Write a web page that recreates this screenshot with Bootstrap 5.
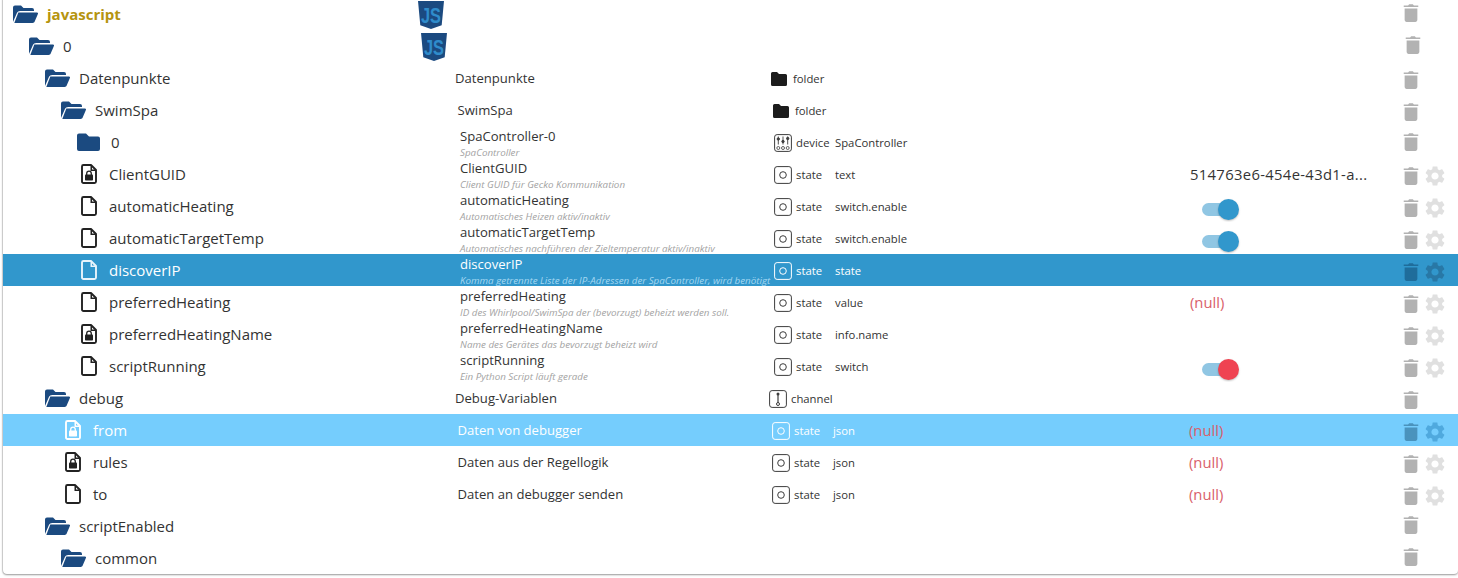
<!DOCTYPE html>
<html lang="de">
<head>
<meta charset="utf-8">
<title>Objekte</title>
<link rel="stylesheet" href="https://cdn.jsdelivr.net/npm/bootstrap@5.3.0/dist/css/bootstrap.min.css">
<script src="https://cdn.jsdelivr.net/npm/bootstrap@5.3.0/dist/js/bootstrap.bundle.min.js"></script>
<style>
html,body{height:100%;overflow:hidden;background:#fff}
body{font-family:"Open Sans","Liberation Sans",sans-serif;color:#333}
.tree-box{margin:-2px 0 0 3px;width:1455px;height:576px;border:0;border-radius:0 0 4px 4px;box-shadow:0 1px 2px rgba(0,0,0,.4),-1px 0 1px rgba(0,0,0,.12);overflow:hidden}
.obj-row{height:32px;overflow:hidden}
.obj-row.sel{background:#3197cc;color:#fff}
.obj-row.act{background:#75cdfd;color:#fff}
.cell-name{flex:none;font-size:15px;white-space:nowrap}
.lv0 .cell-name{width:447px;padding-left:10px}
.lv1 .cell-name{width:449.5px;padding-left:26px}
.lv2 .cell-name{width:452px;padding-left:42px}
.lv3 .cell-name{width:454.5px;padding-left:58px}
.lv4 .cell-name{width:457px;padding-left:74px}
.lv0 .cell-title{width:317px}
.lv1 .cell-title{width:316.5px}
.lv2 .cell-title{width:316px}
.lv3 .cell-title{width:315.5px}
.lv4 .cell-title{width:315px}
.cell-title{flex:none;font-size:13.1px;line-height:16px;white-space:nowrap}
.cell-title .sub-line{display:block;font-size:9.8px;line-height:12px;margin-top:3px;font-style:italic;color:#a3a3a3}
.sel .sub-line{color:#a5d8f2}
.with-sub{margin-top:2px}
.cell-type{flex:none;width:419px;font-size:11.3px;white-space:nowrap;margin-top:2px}
.lv0 .cell-type,.lv1 .cell-type{width:423px}
.lv2 .cell-type{width:419px}
.lv3 .cell-type{width:417px}
.lv4 .cell-type{width:415px}
.type-label{display:inline-block;width:39px}
.cell-value{flex:none;width:210px;font-size:14.8px;white-space:nowrap}
.val-guid{display:block;letter-spacing:.33px;margin-top:1px}
.val-null{color:#d9606a}
.lv3 .val-null{text-indent:-1px}
.cell-acts{flex:none;color:#b2b2b2;margin-left:2px}
.acts-low{margin-top:4px}
.acts-high{margin-top:-2px}
.ico-open{width:25px;height:18px;color:#1b4a80;margin-right:9px;flex:none}
.ico-closed{width:23px;height:18px;color:#1b4a80;margin-right:11px;flex:none}
.ico-file{width:16px;height:20px;margin-left:4px;margin-right:12px;flex:none;color:#222}
.act .ico-file,.act .ico-sq{color:#fff}
.sel .ico-sq{color:#fff}
.sel .ico-file{color:#e8f4fb}
.ico-folder{width:16px;height:14px;color:#1c1c1c;margin-right:6px;flex:none}
.ico-sq{width:18px;height:18px;color:#3c3c3c;margin-left:-1px;margin-right:4px;flex:none}
.ico-chan{margin-left:-2px}
.ico-js{width:26px;height:28px;margin-left:-32px;margin-top:1px;flex:none}
.lv1 .ico-js{margin-left:-31.5px}
.js-name{color:#b5940f;font-weight:700}
.ico-trash{width:18px;height:20px;display:block;color:#b2b2b2;flex:none;margin-right:3px}
.ico-gear{width:24px;height:24px;display:block;color:#e0e0e0;flex:none;margin-left:0}
.sel .ico-trash{color:#1f6d9b}
.act .ico-trash{color:#4a93bd}
.sel .ico-gear{color:#2878a6}
.act .ico-gear{color:#4fa9de}
.sw-wrap{display:block;position:relative;width:37px;height:21px;margin-left:12px;margin-top:6px}
.sw-track{display:block;margin-top:4px;width:26px;height:13px;border-radius:7px;background:#90c6e3;position:absolute;left:0;top:0}
.sw-knob{position:absolute;left:16px;top:0;width:21px;height:21px;border-radius:50%;background:#3197cc;box-shadow:0 1px 2px rgba(0,0,0,.25)}
.sw-knob.off{background:#ef4352}
</style>
</head>
<body>
<svg width="0" height="0" class="position-absolute">
<defs>
<symbol id="i-open" viewBox="0 0 25 18"><path fill="currentColor" d="M0 17V2.500A2 2 0 0 1 2 .5h6l2.500 2.500H19a2 2 0 0 1 2 2v1H7.200C5.700 6 4.500 6.800 3.900 8L0 17z"/><path fill="currentColor" d="M5.300 7.500H24c.8 0 1.200.7 1 1.300L21.800 16.300c-.4.900-1.100 1.700-2.200 1.700H1.300L5.300 7.500z"/></symbol>
<symbol id="i-closed" viewBox="0 0 23 18"><path fill="currentColor" d="M0 2.500A2 2 0 0 1 2 .5h7l3 3h9a2 2 0 0 1 2 2V16a2 2 0 0 1-2 2H2a2 2 0 0 1-2-2z"/></symbol>
<symbol id="i-file" viewBox="0 0 16 20"><path fill="none" stroke="currentColor" stroke-width="1.900" stroke-linejoin="round" d="M2.500 1H10l5 5v11.500a1.500 1.500 0 0 1-1.500 1.500h-11A1.500 1.500 0 0 1 1 17.500v-15A1.500 1.500 0 0 1 2.500 1z"/><path fill="currentColor" d="M9.500 1v6H15V5.500h-4V1z"/></symbol>
<symbol id="i-lock" viewBox="0 0 16 20"><path fill="none" stroke="currentColor" stroke-width="1.900" stroke-linejoin="round" d="M2.500 1H10l5 5v11.500a1.500 1.500 0 0 1-1.500 1.500h-11A1.500 1.500 0 0 1 1 17.500v-15A1.500 1.500 0 0 1 2.500 1z"/><path fill="currentColor" d="M9.500 1v6H15V5.500h-4V1z"/><rect x="4" y="10.500" width="8" height="6" rx=".8" fill="currentColor"/><path fill="none" stroke="currentColor" stroke-width="1.300" d="M5.700 11V9.500a2.300 2.300 0 0 1 4.600 0V11"/></symbol>
<symbol id="i-folder" viewBox="0 0 16 14"><path fill="currentColor" d="M0 1.500A1.500 1.500 0 0 1 1.500 0h4.500l2 2h6.500A1.500 1.500 0 0 1 16 3.500V12.500a1.500 1.500 0 0 1-1.500 1.500h-13A1.500 1.500 0 0 1 0 12.500z"/></symbol>
<symbol id="i-state" viewBox="0 0 18 18"><rect x=".6" y=".6" width="16.800" height="16.800" rx="2.500" fill="none" stroke="currentColor" stroke-width="1"/><circle cx="9" cy="9" r="3.300" fill="none" stroke="currentColor" stroke-width="1"/></symbol>
<symbol id="i-chan" viewBox="0 0 18 18"><rect x=".6" y=".6" width="16.800" height="16.800" rx="2.500" fill="none" stroke="currentColor" stroke-width="1"/><circle cx="9" cy="4" r="1.500" fill="currentColor"/><path stroke="currentColor" stroke-width="1.200" d="M9 4v9"/><circle cx="9" cy="14" r="1.500" fill="#fff" stroke="currentColor" stroke-width="1"/></symbol>
<symbol id="i-device" viewBox="0 0 18 18"><rect x=".6" y=".6" width="16.800" height="16.800" rx="2.500" fill="none" stroke="currentColor" stroke-width="1"/><g stroke="currentColor" stroke-width=".9" fill="currentColor"><path d="M4.300 2.500v8M9 2.500v8M13.700 2.500v8"/><circle cx="4.300" cy="5" r="1.200"/><circle cx="9" cy="7.500" r="1.200"/><circle cx="13.700" cy="4.500" r="1.200"/></g><g fill="none" stroke="currentColor" stroke-width=".8"><circle cx="4.300" cy="14" r="1.500"/><circle cx="9" cy="14" r="1.500"/><circle cx="13.700" cy="14" r="1.500"/></g></symbol>
<symbol id="i-trash" viewBox="3 1 18 22"><path fill="currentColor" d="M5 19.500c0 1.300.9 2.500 2.200 2.500h9.600c1.300 0 2.200-1.200 2.200-2.500V7H5v12.500zM20 3.800h-4.800L14 2.500h-4L8.800 3.800H4V5.500h16z"/></symbol>
<symbol id="i-gear" viewBox="0 0 24 24"><path fill="currentColor" d="M19.140 12.940c.04-.3.06-.61.06-.94 0-.32-.02-.64-.07-.94l2.030-1.580c.18-.14.23-.41.12-.61l-1.920-3.320c-.12-.22-.37-.29-.59-.22l-2.390.96c-.5-.38-1.030-.7-1.620-.94l-.36-2.540c-.04-.24-.24-.41-.48-.41h-3.840c-.24 0-.43.17-.47.41l-.36 2.540c-.59.24-1.130.57-1.620.94l-2.390-.96c-.22-.08-.47 0-.59.22L2.740 8.870c-.12.21-.08.47.12.61l2.030 1.580c-.05.3-.09.63-.09.94s.02.64.07.94l-2.030 1.580c-.18.14-.23.41-.12.61l1.920 3.320c.12.22.37.29.59.22l2.390-.96c.5.38 1.030.7 1.620.94l.36 2.540c.05.24.24.41.48.41h3.840c.24 0 .44-.17.47-.41l.36-2.540c.59-.24 1.130-.56 1.620-.94l2.390.96c.22.08.47 0 .59-.22l1.920-3.320c.12-.22.07-.47-.12-.61l-2.010-1.580zM12 15.600c-1.980 0-3.600-1.620-3.600-3.600s1.620-3.600 3.600-3.600 3.600 1.620 3.600 3.600-1.620 3.600-3.600 3.600z"/></symbol>
<symbol id="i-js" viewBox="0 0 26 28"><path fill="#1b4a80" d="M0 0h26l-2.300 24.300L13 28 2.300 24.300z"/><text x="13" y="22" text-anchor="middle" font-family="Liberation Sans" font-weight="700" font-size="22" textLength="20" lengthAdjust="spacingAndGlyphs" fill="#2f8ccb">JS</text></symbol>
</defs>
</svg>

<div class="card tree-box">

<div class="obj-row lv0 d-flex align-items-center">
 <div class="cell-name d-flex align-items-center js-name"><svg class="ico-open"><use href="#i-open"/></svg><span>javascript</span></div>
 <div class="cell-title"><svg class="ico-js d-block"><use href="#i-js"/></svg></div>
 <div class="cell-type"></div><div class="cell-value"></div>
 <div class="cell-acts d-flex acts-high"><svg class="ico-trash"><use href="#i-trash"/></svg></div>
</div>

<div class="obj-row lv1 d-flex align-items-center">
 <div class="cell-name d-flex align-items-center"><svg class="ico-open"><use href="#i-open"/></svg><span>0</span></div>
 <div class="cell-title"><svg class="ico-js d-block"><use href="#i-js"/></svg></div>
 <div class="cell-type"></div><div class="cell-value"></div>
 <div class="cell-acts d-flex acts-high"><svg class="ico-trash"><use href="#i-trash"/></svg></div>
</div>

<div class="obj-row lv2 d-flex align-items-center">
 <div class="cell-name d-flex align-items-center"><svg class="ico-open"><use href="#i-open"/></svg><span>Datenpunkte</span></div>
 <div class="cell-title">Datenpunkte</div>
 <div class="cell-type d-flex align-items-center"><svg class="ico-folder"><use href="#i-folder"/></svg><span>folder</span></div>
 <div class="cell-value"></div>
 <div class="cell-acts d-flex acts-low"><svg class="ico-trash"><use href="#i-trash"/></svg></div>
</div>

<div class="obj-row lv3 d-flex align-items-center">
 <div class="cell-name d-flex align-items-center"><svg class="ico-open"><use href="#i-open"/></svg><span>SwimSpa</span></div>
 <div class="cell-title">SwimSpa</div>
 <div class="cell-type d-flex align-items-center"><svg class="ico-folder"><use href="#i-folder"/></svg><span>folder</span></div>
 <div class="cell-value"></div>
 <div class="cell-acts d-flex acts-low"><svg class="ico-trash"><use href="#i-trash"/></svg></div>
</div>

<div class="obj-row lv4 d-flex align-items-center">
 <div class="cell-name d-flex align-items-center"><svg class="ico-closed"><use href="#i-closed"/></svg><span>0</span></div>
 <div class="cell-title with-sub">SpaController-0<span class="sub-line">SpaController</span></div>
 <div class="cell-type d-flex align-items-center"><svg class="ico-sq"><use href="#i-device"/></svg><span class="type-label">device</span><span>SpaController</span></div>
 <div class="cell-value"></div>
 <div class="cell-acts d-flex"><svg class="ico-trash"><use href="#i-trash"/></svg></div>
</div>

<div class="obj-row lv4 d-flex align-items-center">
 <div class="cell-name d-flex align-items-center"><svg class="ico-file"><use href="#i-lock"/></svg><span>ClientGUID</span></div>
 <div class="cell-title with-sub">ClientGUID<span class="sub-line">Client GUID für Gecko Kommunikation</span></div>
 <div class="cell-type d-flex align-items-center"><svg class="ico-sq"><use href="#i-state"/></svg><span class="type-label">state</span><span>text</span></div>
 <div class="cell-value"><span class="val-guid">514763e6-454e-43d1-a...</span></div>
 <div class="cell-acts d-flex align-items-center acts-low"><svg class="ico-trash"><use href="#i-trash"/></svg><svg class="ico-gear"><use href="#i-gear"/></svg></div>
</div>

<div class="obj-row lv4 d-flex align-items-center">
 <div class="cell-name d-flex align-items-center"><svg class="ico-file"><use href="#i-file"/></svg><span>automaticHeating</span></div>
 <div class="cell-title with-sub">automaticHeating<span class="sub-line">Automatisches Heizen aktiv/inaktiv</span></div>
 <div class="cell-type d-flex align-items-center"><svg class="ico-sq"><use href="#i-state"/></svg><span class="type-label">state</span><span>switch.enable</span></div>
 <div class="cell-value"><span class="sw-wrap"><span class="sw-track"></span><span class="sw-knob"></span></span></div>
 <div class="cell-acts d-flex align-items-center acts-low"><svg class="ico-trash"><use href="#i-trash"/></svg><svg class="ico-gear"><use href="#i-gear"/></svg></div>
</div>

<div class="obj-row lv4 d-flex align-items-center">
 <div class="cell-name d-flex align-items-center"><svg class="ico-file"><use href="#i-file"/></svg><span>automaticTargetTemp</span></div>
 <div class="cell-title with-sub">automaticTargetTemp<span class="sub-line">Automatisches nachführen der Zieltemperatur aktiv/inaktiv</span></div>
 <div class="cell-type d-flex align-items-center"><svg class="ico-sq"><use href="#i-state"/></svg><span class="type-label">state</span><span>switch.enable</span></div>
 <div class="cell-value"><span class="sw-wrap"><span class="sw-track"></span><span class="sw-knob"></span></span></div>
 <div class="cell-acts d-flex align-items-center acts-low"><svg class="ico-trash"><use href="#i-trash"/></svg><svg class="ico-gear"><use href="#i-gear"/></svg></div>
</div>

<div class="obj-row lv4 sel d-flex align-items-center">
 <div class="cell-name d-flex align-items-center"><svg class="ico-file"><use href="#i-file"/></svg><span>discoverIP</span></div>
 <div class="cell-title with-sub">discoverIP<span class="sub-line">Komma getrennte Liste der IP-Adressen der SpaController, wird benötigt</span></div>
 <div class="cell-type d-flex align-items-center"><svg class="ico-sq"><use href="#i-state"/></svg><span class="type-label">state</span><span>state</span></div>
 <div class="cell-value"></div>
 <div class="cell-acts d-flex align-items-center acts-low"><svg class="ico-trash"><use href="#i-trash"/></svg><svg class="ico-gear"><use href="#i-gear"/></svg></div>
</div>

<div class="obj-row lv4 d-flex align-items-center">
 <div class="cell-name d-flex align-items-center"><svg class="ico-file"><use href="#i-file"/></svg><span>preferredHeating</span></div>
 <div class="cell-title with-sub">preferredHeating<span class="sub-line">ID des Whirlpool/SwimSpa der (bevorzugt) beheizt werden soll.</span></div>
 <div class="cell-type d-flex align-items-center"><svg class="ico-sq"><use href="#i-state"/></svg><span class="type-label">state</span><span>value</span></div>
 <div class="cell-value val-null">(null)</div>
 <div class="cell-acts d-flex align-items-center acts-low"><svg class="ico-trash"><use href="#i-trash"/></svg><svg class="ico-gear"><use href="#i-gear"/></svg></div>
</div>

<div class="obj-row lv4 d-flex align-items-center">
 <div class="cell-name d-flex align-items-center"><svg class="ico-file"><use href="#i-lock"/></svg><span>preferredHeatingName</span></div>
 <div class="cell-title with-sub">preferredHeatingName<span class="sub-line">Name des Gerätes das bevorzugt beheizt wird</span></div>
 <div class="cell-type d-flex align-items-center"><svg class="ico-sq"><use href="#i-state"/></svg><span class="type-label">state</span><span>info.name</span></div>
 <div class="cell-value"></div>
 <div class="cell-acts d-flex align-items-center acts-low"><svg class="ico-trash"><use href="#i-trash"/></svg><svg class="ico-gear"><use href="#i-gear"/></svg></div>
</div>

<div class="obj-row lv4 d-flex align-items-center">
 <div class="cell-name d-flex align-items-center"><svg class="ico-file"><use href="#i-file"/></svg><span>scriptRunning</span></div>
 <div class="cell-title with-sub">scriptRunning<span class="sub-line">Ein Python Script läuft gerade</span></div>
 <div class="cell-type d-flex align-items-center"><svg class="ico-sq"><use href="#i-state"/></svg><span class="type-label">state</span><span>switch</span></div>
 <div class="cell-value"><span class="sw-wrap"><span class="sw-track"></span><span class="sw-knob off"></span></span></div>
 <div class="cell-acts d-flex align-items-center acts-low"><svg class="ico-trash"><use href="#i-trash"/></svg><svg class="ico-gear"><use href="#i-gear"/></svg></div>
</div>

<div class="obj-row lv2 d-flex align-items-center">
 <div class="cell-name d-flex align-items-center"><svg class="ico-open"><use href="#i-open"/></svg><span>debug</span></div>
 <div class="cell-title">Debug-Variablen</div>
 <div class="cell-type d-flex align-items-center"><svg class="ico-sq ico-chan"><use href="#i-chan"/></svg><span>channel</span></div>
 <div class="cell-value"></div>
 <div class="cell-acts d-flex acts-low"><svg class="ico-trash"><use href="#i-trash"/></svg></div>
</div>

<div class="obj-row lv3 act d-flex align-items-center">
 <div class="cell-name d-flex align-items-center"><svg class="ico-file"><use href="#i-lock"/></svg><span>from</span></div>
 <div class="cell-title">Daten von debugger</div>
 <div class="cell-type d-flex align-items-center"><svg class="ico-sq"><use href="#i-state"/></svg><span class="type-label">state</span><span>json</span></div>
 <div class="cell-value val-null">(null)</div>
 <div class="cell-acts d-flex align-items-center acts-low"><svg class="ico-trash"><use href="#i-trash"/></svg><svg class="ico-gear"><use href="#i-gear"/></svg></div>
</div>

<div class="obj-row lv3 d-flex align-items-center">
 <div class="cell-name d-flex align-items-center"><svg class="ico-file"><use href="#i-lock"/></svg><span>rules</span></div>
 <div class="cell-title">Daten aus der Regellogik</div>
 <div class="cell-type d-flex align-items-center"><svg class="ico-sq"><use href="#i-state"/></svg><span class="type-label">state</span><span>json</span></div>
 <div class="cell-value val-null">(null)</div>
 <div class="cell-acts d-flex align-items-center acts-low"><svg class="ico-trash"><use href="#i-trash"/></svg><svg class="ico-gear"><use href="#i-gear"/></svg></div>
</div>

<div class="obj-row lv3 d-flex align-items-center">
 <div class="cell-name d-flex align-items-center"><svg class="ico-file"><use href="#i-file"/></svg><span>to</span></div>
 <div class="cell-title">Daten an debugger senden</div>
 <div class="cell-type d-flex align-items-center"><svg class="ico-sq"><use href="#i-state"/></svg><span class="type-label">state</span><span>json</span></div>
 <div class="cell-value val-null">(null)</div>
 <div class="cell-acts d-flex align-items-center acts-low"><svg class="ico-trash"><use href="#i-trash"/></svg><svg class="ico-gear"><use href="#i-gear"/></svg></div>
</div>

<div class="obj-row lv2 d-flex align-items-center">
 <div class="cell-name d-flex align-items-center"><svg class="ico-open"><use href="#i-open"/></svg><span>scriptEnabled</span></div>
 <div class="cell-title"></div><div class="cell-type"></div><div class="cell-value"></div>
 <div class="cell-acts d-flex acts-high"><svg class="ico-trash"><use href="#i-trash"/></svg></div>
</div>

<div class="obj-row lv3 d-flex align-items-center">
 <div class="cell-name d-flex align-items-center"><svg class="ico-open"><use href="#i-open"/></svg><span>common</span></div>
 <div class="cell-title"></div><div class="cell-type"></div><div class="cell-value"></div>
 <div class="cell-acts d-flex acts-high"><svg class="ico-trash"><use href="#i-trash"/></svg></div>
</div>

</div>
</body>
</html>
